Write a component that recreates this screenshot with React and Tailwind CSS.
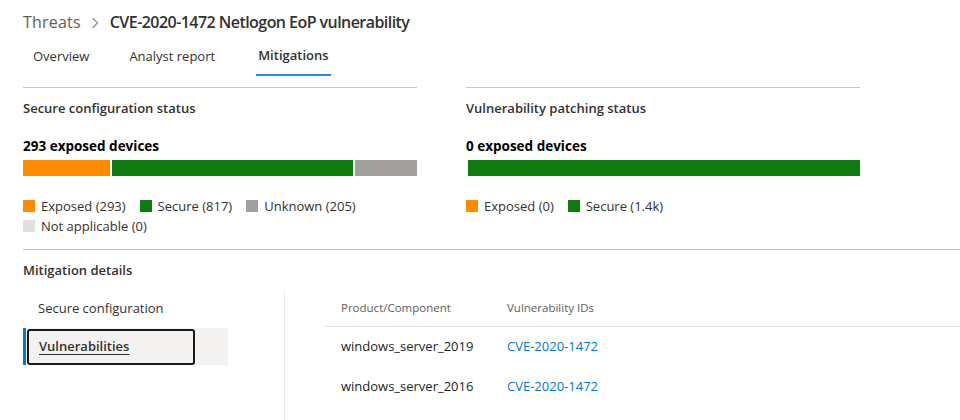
import React from "react";

const font = { fontFamily: '"Segoe UI", "Open Sans", "Noto Sans", sans-serif' };

function Legend({ color, label }) {
  return (
    <div className="flex items-center gap-[6px] mr-[14px]">
      <span className={`w-[12px] h-[12px] ${color}`} />
      <span>{label}</span>
    </div>
  );
}

function StatusCol({ title, count, bar, legends }) {
  return (
    <div className="w-[394px] border-t border-[#c8c6c4]">
      <div className="h-[42px] flex items-center text-[13px] font-semibold text-[#323130]">{title}</div>
      <div className="h-[30px] flex items-center text-[13.5px] font-bold text-black pt-[2px]">{count}</div>
      <div className="flex h-[16px] gap-[2px]">{bar}</div>
      <div className="mt-[20px] flex flex-wrap text-[13px] text-[#323130] leading-[20px] w-[370px]">
        {legends}
      </div>
    </div>
  );
}

export default function App() {
  return (
    <div className="w-[960px] h-[420px] overflow-hidden bg-white text-[#323130]" style={font}>
      <div className="pl-[23px]">
        <div className="pt-[10px] h-[34px] flex items-center text-[16px]">
          <span className="text-[#605e5c] tracking-[0.2px]">Threats</span>
          <svg width="8" height="12" viewBox="0 0 8 12" className="ml-[10px] mr-[11px] mt-[1px]">
            <path d="M1.5 1 L6.5 6 L1.5 11" fill="none" stroke="#8a8886" strokeWidth="1.1" />
          </svg>
          <span className="font-semibold text-[#323130] tracking-[-0.55px]">CVE-2020-1472 Netlogon EoP vulnerability</span>
        </div>
        <div className="flex h-[53px] items-start text-[13px] ml-[10px]">
          <div className="h-[42px] flex items-center pt-[4px]">Overview</div>
          <div className="h-[42px] flex items-center pt-[4px] ml-[40px]">Analyst report</div>
          <div className="h-[42px] flex items-center ml-[41px] px-[2px] pt-[4px] border-b-2 border-[#2b88d8] font-semibold">Mitigations</div>
        </div>
        <div className="flex gap-[49px]">
          <StatusCol
            title="Secure configuration status"
            count="293 exposed devices"
            bar={
              <>
                <div className="w-[87px] bg-[#ff8c00]" />
                <div className="w-[241px] bg-[#107c10]" />
                <div className="w-[62px] bg-[#a19f9d]" />
              </>
            }
            legends={
              <>
                <Legend color="bg-[#ff8c00]" label="Exposed (293)" />
                <Legend color="bg-[#107c10]" label="Secure (817)" />
                <Legend color="bg-[#a19f9d]" label="Unknown (205)" />
                <Legend color="bg-[#e1dfdd]" label="Not applicable (0)" />
              </>
            }
          />
          <StatusCol
            title="Vulnerability patching status"
            count="0 exposed devices"
            bar={<div className="ml-[2px] w-[392px] bg-[#107c10]" />}
            legends={
              <>
                <Legend color="bg-[#ff8c00]" label="Exposed (0)" />
                <Legend color="bg-[#107c10]" label="Secure (1.4k)" />
              </>
            }
          />
        </div>
        <div className="mt-[13px] border-t border-[#c8c6c4]">
          <div className="h-[40px] flex items-center text-[13px] font-semibold pt-[2px]">Mitigation details</div>
          <div className="flex">
            <div className="w-[262px] border-r border-[#edebe9] h-[200px]">
              <div className="h-[38px] flex items-center pl-[15px] text-[13px]">Secure configuration</div>
              <div className="w-[205px] h-[37px] bg-[#f3f2f1] flex">
                <div className="w-[3px] bg-[#0078d4]" />
                <div className="w-[168px] ml-[1px] mt-[1px] rounded-[3px] border-2 border-[#1b1a19] flex items-center pl-[10px] text-[13px] font-semibold underline underline-offset-[3px]">
                  Vulnerabilities
                </div>
              </div>
            </div>
            <div className="ml-[40px] flex-1">
              <div className="h-[37px] flex items-center border-b border-[#e1dfdd] text-[11.5px] text-[#605e5c]">
                <div className="w-[182px] pl-[16px]">Product/Component</div>
                <div>Vulnerability IDs</div>
              </div>
              {["windows_server_2019", "windows_server_2016"].map((p) => (
                <div key={p} className="h-[40px] flex items-center text-[13px]">
                  <div className="w-[182px] pl-[16px] text-[#201f1e]">{p}</div>
                  <div className="text-[#0078d4]">CVE-2020-1472</div>
                </div>
              ))}
            </div>
          </div>
        </div>
      </div>
    </div>
  );
}
